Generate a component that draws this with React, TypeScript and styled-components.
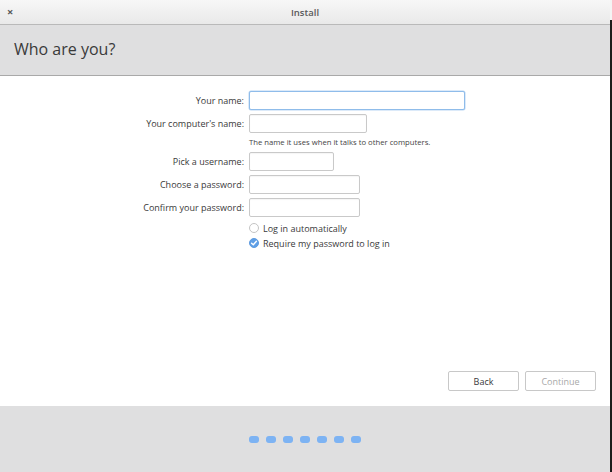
import React from 'react'
import styled, { createGlobalStyle } from 'styled-components'

const GlobalStyle = createGlobalStyle`
  html, body {
    margin: 0;
    padding: 0;
    background: #ffffff;
  }
  body {
    font-family: "Open Sans", "Noto Sans", sans-serif;
    color: #333333;
  }
`

const Screen = styled.div`
  width: 612px;
  height: 472px;
  display: flex;
  background: #ffffff;
`

const Window = styled.div`
  width: 610px;
  height: 472px;
  display: flex;
  flex-direction: column;
  background: #ffffff;
`

const Edge = styled.div`
  width: 2px;
  background: linear-gradient(#f4f4f4 0 20px, #1c1c1c 20px);
`

const TitleBar = styled.div`
  height: 24px;
  flex: none;
  position: relative;
  display: flex;
  align-items: center;
  justify-content: center;
  background: linear-gradient(#f7f7f7, #e9e9e9);
  border-bottom: 1px solid #b9b9b9;
`

const CloseBtn = styled.span`
  position: absolute;
  left: 7px;
  top: 6px;
  font-size: 11px;
  font-weight: 700;
  line-height: 12px;
  color: #555555;
`

const Title = styled.span`
  font-size: 9.5px;
  font-weight: 600;
  color: #5a5a5a;
`

const Header = styled.div`
  height: 51px;
  flex: none;
  display: flex;
  align-items: center;
  padding: 0 0 2px 14px;
  box-sizing: border-box;
  background: #dfdfe0;
  border-bottom: 1px solid #a9a9a9;
  font-size: 16px;
  color: #3a3a3a;
`

const Body = styled.div`
  flex: 1;
  display: flex;
  flex-direction: column;
  padding-top: 15px;
`

const Form = styled.div`
  display: grid;
  grid-template-columns: 244px auto;
  column-gap: 5px;
  row-gap: 4px;
  justify-items: start;
  align-items: center;
`

const Label = styled.label`
  justify-self: end;
  font-size: 9px;
  color: #3a3a3a;
`

const Field = styled.div<{ $w: number; $focus?: boolean }>`
  width: ${p => p.$w}px;
  height: 17px;
  box-sizing: content-box;
  border: 1px solid ${p => (p.$focus ? '#8fbcea' : '#c9c9c9')};
  border-radius: 2px;
  background: #ffffff;
  box-shadow: ${p => (p.$focus ? '0 0 0 0.5px #b9d6f3' : 'inset 0 1px 1px rgba(0,0,0,0.04)')};
`

const Hint = styled.div`
  grid-column: 2;
  font-size: 7.7px;
  color: #444444;
  margin: 0 0 1px;
`

const Options = styled.div`
  grid-column: 2;
  display: flex;
  flex-direction: column;
  gap: 3px;
  margin-top: 1px;
`

const Option = styled.div`
  display: flex;
  align-items: center;
  gap: 4px;
  font-size: 9px;
  color: #3a3a3a;
  height: 12px;
`

const Radio = styled.span<{ $checked?: boolean }>`
  width: 10px;
  height: 10px;
  box-sizing: border-box;
  border-radius: 50%;
  border: 1px solid ${p => (p.$checked ? '#5d9be0' : '#c4c4c4')};
  background: ${p => (p.$checked ? '#5f9fe6' : '#ffffff')};
  display: flex;
  align-items: center;
  justify-content: center;
`

const Spacer = styled.div`
  flex: 1;
`

const ButtonRow = styled.div`
  display: flex;
  justify-content: flex-end;
  gap: 6px;
  padding: 0 14px 15px 0;
`

const Button = styled.button<{ $disabled?: boolean }>`
  width: 71px;
  height: 20px;
  padding: 0;
  border: 1px solid #c8c8c8;
  border-radius: 2px;
  background: #ffffff;
  font-family: inherit;
  font-size: 9px;
  color: ${p => (p.$disabled ? '#a8a8a8' : '#3a3a3a')};
`

const Footer = styled.div`
  height: 66px;
  flex: none;
  display: flex;
  align-items: center;
  justify-content: center;
  gap: 7px;
  background: #dfdfe0;
`

const Dot = styled.span`
  width: 10px;
  height: 7px;
  border-radius: 3px;
  background: #7db3f3;
`

const fields = [
  { label: 'Your name:', w: 214, focus: true },
  { label: "Your computer's name:", w: 116, hint: 'The name it uses when it talks to other computers.' },
  { label: 'Pick a username:', w: 83 },
  { label: 'Choose a password:', w: 109 },
  { label: 'Confirm your password:', w: 109 },
]

export default function App() {
  return (
    <Screen>
      <GlobalStyle />
      <Window>
        <TitleBar>
          <CloseBtn>×</CloseBtn>
          <Title>Install</Title>
        </TitleBar>
        <Header>Who are you?</Header>
        <Body>
          <Form>
            {fields.map(f => (
              <React.Fragment key={f.label}>
                <Label>{f.label}</Label>
                <Field $w={f.w} $focus={f.focus} />
                {f.hint && <Hint>{f.hint}</Hint>}
              </React.Fragment>
            ))}
            <Options>
              <Option>
                <Radio />
                Log in automatically
              </Option>
              <Option>
                <Radio $checked>
                  <svg width="8" height="8" viewBox="0 0 8 8">
                    <path d="M1.6 4.2 L3.3 5.8 L6.4 2.2" fill="none" stroke="#ffffff" strokeWidth="1.4" strokeLinecap="round" strokeLinejoin="round" />
                  </svg>
                </Radio>
                Require my password to log in
              </Option>
            </Options>
          </Form>
          <Spacer />
          <ButtonRow>
            <Button>Back</Button>
            <Button $disabled>Continue</Button>
          </ButtonRow>
        </Body>
        <Footer>
          {Array.from({ length: 7 }).map((_, i) => (
            <Dot key={i} />
          ))}
        </Footer>
      </Window>
      <Edge />
    </Screen>
  )
}
